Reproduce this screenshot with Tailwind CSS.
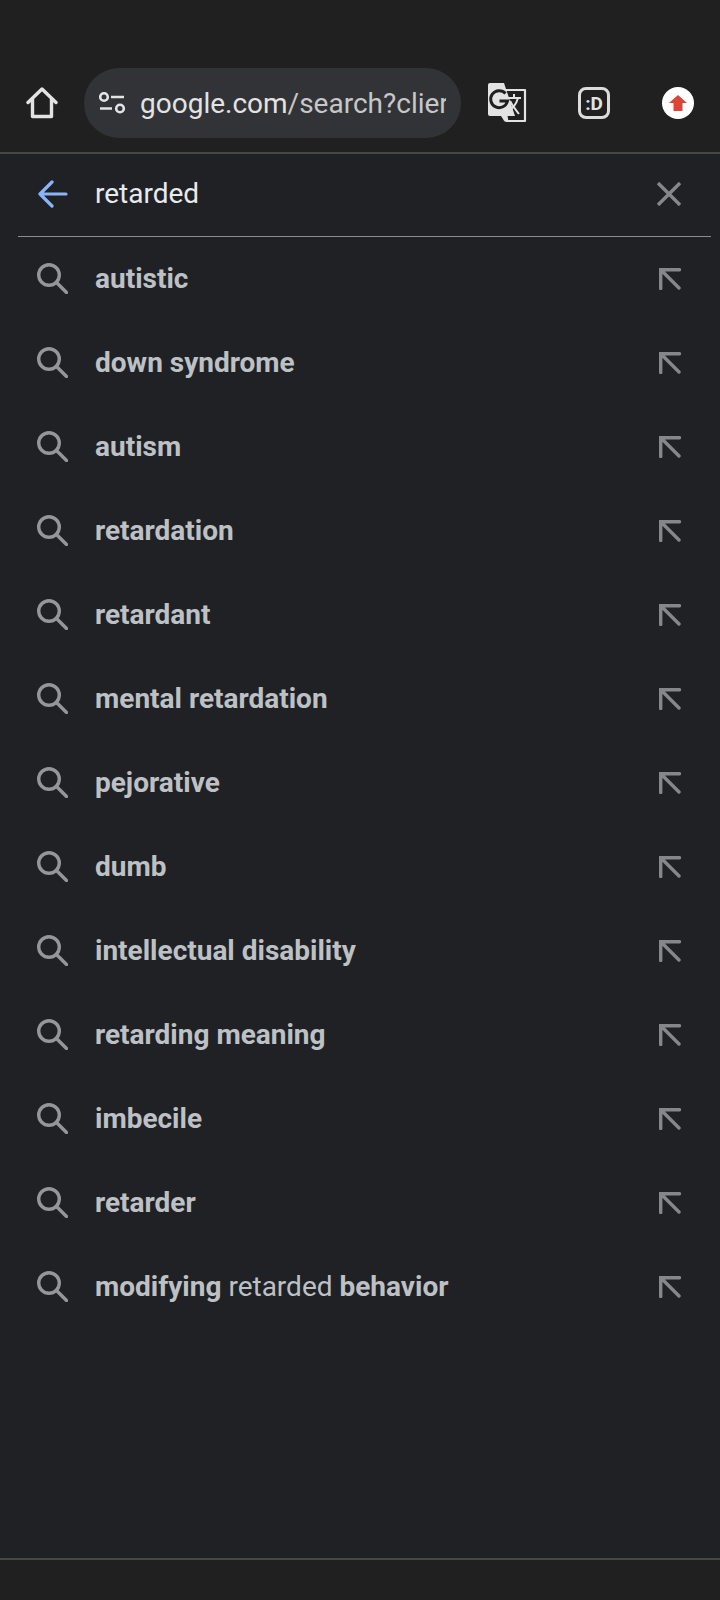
<!DOCTYPE html>
<html><head><meta charset="utf-8">
<script src="https://cdn.jsdelivr.net/npm/@tailwindcss/browser@4"></script>
</head>
<body class="m-0 bg-[#202124] font-['Roboto',sans-serif]">
<div class="w-[720px] h-[1600px] flex flex-col overflow-hidden">
  <header class="h-[154px] shrink-0 bg-[#202020] border-b-2 border-[#474747] pt-[68px] pl-[26px] flex items-start">
    <svg class="w-[32px] h-[32px] mt-[19px] shrink-0" viewBox="0 0 32 32" fill="none" stroke="#e3e3e3" stroke-width="3.400" stroke-linejoin="round" stroke-linecap="round"><path d="M2 15.500 16 2 30 15.500M6.500 12V29.500H25.500V12" /></svg>
    <div class="ml-[26px] w-[377px] h-[70px] shrink-0 rounded-full bg-[#323337] flex items-center pl-[15px] pr-[14px]">
      <svg class="w-[26px] h-[22px] shrink-0" viewBox="0 0 26 22" fill="none" stroke="#e3e3e3" stroke-width="2.600"><circle cx="5" cy="5" r="3.800"/><path d="M12 5H25M1 16.500H13"/><circle cx="21" cy="16.500" r="3.800"/></svg>
      <div class="ml-[15px] w-[306px] overflow-hidden whitespace-nowrap text-[28px] leading-[36px] pt-[2px] text-[#c7c7c7]"><span class="text-[#e3e3e3]">google.com</span>/search?clier</div>
    </div>
    <svg class="w-[40px] h-[40px] ml-[26px] mt-[15px] shrink-0" viewBox="0 0 40 40">
      <path d="M16 7H38V38H20Z" fill="#202020" stroke="#e3e3e3" stroke-width="2.200" stroke-linejoin="round"/>
      <path d="M3 0H17L28 33H3Q1 33 1 31V2Q1 0 3 0Z" fill="#e3e3e3"/>
      <path d="M20 33 22 39H20Q17 39 16 36L14 33Z" fill="#e3e3e3"/>
      <path d="M20 15H34M27 11V15M31 15C29 22 25 26 21 28M23 18C26 24 29 27 32 31" fill="none" stroke="#e3e3e3" stroke-width="2"/>
      <path d="M18.500 10.500A8.500 8.500 0 1 0 20.500 18H12.500" fill="none" stroke="#202020" stroke-width="3"/>
    </svg>
    <div class="ml-[51px] mt-[19px] w-[32px] h-[32px] shrink-0 rounded-[8px] border-[3px] border-[#dcdcdc] flex items-center justify-center text-[19px] leading-none font-bold text-[#e3e3e3]">:D</div>
    <div class="ml-[52px] mt-[19px] w-[32px] h-[32px] shrink-0 rounded-full bg-white flex items-center justify-center">
      <svg class="w-[18px] h-[16px]" viewBox="0 0 18 16"><path d="M9 0 18 8H13.500V16H4.500V8H0Z" fill="#db4437"/></svg>
    </div>
  </header>

  <main class="flex-1 bg-[#202124]">
    <div class="ml-[18px] w-[693px] h-[83px] border-b border-[#8a8b8d] flex items-center pr-[30px] pb-[2px]">
      <svg class="w-[30px] h-[28px] ml-[20px] shrink-0" viewBox="0 0 30 28" fill="none" stroke="#8ab4f8" stroke-width="3.200" stroke-linecap="round" stroke-linejoin="round"><path d="M28 14H2M14 2 2 14 14 26"/></svg>
      <div class="ml-[27px] flex-1 text-[28px] leading-[36px] text-[#e8eaed]">retarded</div>
      <svg class="w-[24px] h-[24px] shrink-0" viewBox="0 0 24 24" fill="none" stroke="#85878a" stroke-width="3.400"><path d="M1 1 23 23M23 1 1 23"/></svg>
    </div>

    <ul class="flex flex-col">
      <li class="h-[84px] flex items-center pl-[37px] pr-[39px]">
        <svg class="w-[31px] h-[31px] mb-[2px] shrink-0" viewBox="0 0 31 31" fill="none" stroke="#93969a" stroke-width="3.400" stroke-linecap="round"><circle cx="12" cy="12" r="10.300"/><path d="M20 20 29.500 29.500"/></svg>
        <div class="ml-[27px] flex-1 text-[28px] leading-[36px] font-bold text-[#bdc1c6]">autistic</div>
        <svg class="w-[22px] h-[22px] shrink-0" viewBox="0 0 22 22" fill="none" stroke="#85878a" stroke-width="3.400" stroke-linecap="round"><path d="M20 20 3 3M1.700 20.500V1.700H20.500"/></svg>
      </li>
      <li class="h-[84px] flex items-center pl-[37px] pr-[39px]">
        <svg class="w-[31px] h-[31px] mb-[2px] shrink-0" viewBox="0 0 31 31" fill="none" stroke="#93969a" stroke-width="3.400" stroke-linecap="round"><circle cx="12" cy="12" r="10.300"/><path d="M20 20 29.500 29.500"/></svg>
        <div class="ml-[27px] flex-1 text-[28px] leading-[36px] font-bold text-[#bdc1c6]">down syndrome</div>
        <svg class="w-[22px] h-[22px] shrink-0" viewBox="0 0 22 22" fill="none" stroke="#85878a" stroke-width="3.400" stroke-linecap="round"><path d="M20 20 3 3M1.700 20.500V1.700H20.500"/></svg>
      </li>
      <li class="h-[84px] flex items-center pl-[37px] pr-[39px]">
        <svg class="w-[31px] h-[31px] mb-[2px] shrink-0" viewBox="0 0 31 31" fill="none" stroke="#93969a" stroke-width="3.400" stroke-linecap="round"><circle cx="12" cy="12" r="10.300"/><path d="M20 20 29.500 29.500"/></svg>
        <div class="ml-[27px] flex-1 text-[28px] leading-[36px] font-bold text-[#bdc1c6]">autism</div>
        <svg class="w-[22px] h-[22px] shrink-0" viewBox="0 0 22 22" fill="none" stroke="#85878a" stroke-width="3.400" stroke-linecap="round"><path d="M20 20 3 3M1.700 20.500V1.700H20.500"/></svg>
      </li>
      <li class="h-[84px] flex items-center pl-[37px] pr-[39px]">
        <svg class="w-[31px] h-[31px] mb-[2px] shrink-0" viewBox="0 0 31 31" fill="none" stroke="#93969a" stroke-width="3.400" stroke-linecap="round"><circle cx="12" cy="12" r="10.300"/><path d="M20 20 29.500 29.500"/></svg>
        <div class="ml-[27px] flex-1 text-[28px] leading-[36px] font-bold text-[#bdc1c6]">retardation</div>
        <svg class="w-[22px] h-[22px] shrink-0" viewBox="0 0 22 22" fill="none" stroke="#85878a" stroke-width="3.400" stroke-linecap="round"><path d="M20 20 3 3M1.700 20.500V1.700H20.500"/></svg>
      </li>
      <li class="h-[84px] flex items-center pl-[37px] pr-[39px]">
        <svg class="w-[31px] h-[31px] mb-[2px] shrink-0" viewBox="0 0 31 31" fill="none" stroke="#93969a" stroke-width="3.400" stroke-linecap="round"><circle cx="12" cy="12" r="10.300"/><path d="M20 20 29.500 29.500"/></svg>
        <div class="ml-[27px] flex-1 text-[28px] leading-[36px] font-bold text-[#bdc1c6]">retardant</div>
        <svg class="w-[22px] h-[22px] shrink-0" viewBox="0 0 22 22" fill="none" stroke="#85878a" stroke-width="3.400" stroke-linecap="round"><path d="M20 20 3 3M1.700 20.500V1.700H20.500"/></svg>
      </li>
      <li class="h-[84px] flex items-center pl-[37px] pr-[39px]">
        <svg class="w-[31px] h-[31px] mb-[2px] shrink-0" viewBox="0 0 31 31" fill="none" stroke="#93969a" stroke-width="3.400" stroke-linecap="round"><circle cx="12" cy="12" r="10.300"/><path d="M20 20 29.500 29.500"/></svg>
        <div class="ml-[27px] flex-1 text-[28px] leading-[36px] font-bold text-[#bdc1c6]">mental retardation</div>
        <svg class="w-[22px] h-[22px] shrink-0" viewBox="0 0 22 22" fill="none" stroke="#85878a" stroke-width="3.400" stroke-linecap="round"><path d="M20 20 3 3M1.700 20.500V1.700H20.500"/></svg>
      </li>
      <li class="h-[84px] flex items-center pl-[37px] pr-[39px]">
        <svg class="w-[31px] h-[31px] mb-[2px] shrink-0" viewBox="0 0 31 31" fill="none" stroke="#93969a" stroke-width="3.400" stroke-linecap="round"><circle cx="12" cy="12" r="10.300"/><path d="M20 20 29.500 29.500"/></svg>
        <div class="ml-[27px] flex-1 text-[28px] leading-[36px] font-bold text-[#bdc1c6]">pejorative</div>
        <svg class="w-[22px] h-[22px] shrink-0" viewBox="0 0 22 22" fill="none" stroke="#85878a" stroke-width="3.400" stroke-linecap="round"><path d="M20 20 3 3M1.700 20.500V1.700H20.500"/></svg>
      </li>
      <li class="h-[84px] flex items-center pl-[37px] pr-[39px]">
        <svg class="w-[31px] h-[31px] mb-[2px] shrink-0" viewBox="0 0 31 31" fill="none" stroke="#93969a" stroke-width="3.400" stroke-linecap="round"><circle cx="12" cy="12" r="10.300"/><path d="M20 20 29.500 29.500"/></svg>
        <div class="ml-[27px] flex-1 text-[28px] leading-[36px] font-bold text-[#bdc1c6]">dumb</div>
        <svg class="w-[22px] h-[22px] shrink-0" viewBox="0 0 22 22" fill="none" stroke="#85878a" stroke-width="3.400" stroke-linecap="round"><path d="M20 20 3 3M1.700 20.500V1.700H20.500"/></svg>
      </li>
      <li class="h-[84px] flex items-center pl-[37px] pr-[39px]">
        <svg class="w-[31px] h-[31px] mb-[2px] shrink-0" viewBox="0 0 31 31" fill="none" stroke="#93969a" stroke-width="3.400" stroke-linecap="round"><circle cx="12" cy="12" r="10.300"/><path d="M20 20 29.500 29.500"/></svg>
        <div class="ml-[27px] flex-1 text-[28px] leading-[36px] font-bold text-[#bdc1c6]">intellectual disability</div>
        <svg class="w-[22px] h-[22px] shrink-0" viewBox="0 0 22 22" fill="none" stroke="#85878a" stroke-width="3.400" stroke-linecap="round"><path d="M20 20 3 3M1.700 20.500V1.700H20.500"/></svg>
      </li>
      <li class="h-[84px] flex items-center pl-[37px] pr-[39px]">
        <svg class="w-[31px] h-[31px] mb-[2px] shrink-0" viewBox="0 0 31 31" fill="none" stroke="#93969a" stroke-width="3.400" stroke-linecap="round"><circle cx="12" cy="12" r="10.300"/><path d="M20 20 29.500 29.500"/></svg>
        <div class="ml-[27px] flex-1 text-[28px] leading-[36px] font-bold text-[#bdc1c6]">retarding meaning</div>
        <svg class="w-[22px] h-[22px] shrink-0" viewBox="0 0 22 22" fill="none" stroke="#85878a" stroke-width="3.400" stroke-linecap="round"><path d="M20 20 3 3M1.700 20.500V1.700H20.500"/></svg>
      </li>
      <li class="h-[84px] flex items-center pl-[37px] pr-[39px]">
        <svg class="w-[31px] h-[31px] mb-[2px] shrink-0" viewBox="0 0 31 31" fill="none" stroke="#93969a" stroke-width="3.400" stroke-linecap="round"><circle cx="12" cy="12" r="10.300"/><path d="M20 20 29.500 29.500"/></svg>
        <div class="ml-[27px] flex-1 text-[28px] leading-[36px] font-bold text-[#bdc1c6]">imbecile</div>
        <svg class="w-[22px] h-[22px] shrink-0" viewBox="0 0 22 22" fill="none" stroke="#85878a" stroke-width="3.400" stroke-linecap="round"><path d="M20 20 3 3M1.700 20.500V1.700H20.500"/></svg>
      </li>
      <li class="h-[84px] flex items-center pl-[37px] pr-[39px]">
        <svg class="w-[31px] h-[31px] mb-[2px] shrink-0" viewBox="0 0 31 31" fill="none" stroke="#93969a" stroke-width="3.400" stroke-linecap="round"><circle cx="12" cy="12" r="10.300"/><path d="M20 20 29.500 29.500"/></svg>
        <div class="ml-[27px] flex-1 text-[28px] leading-[36px] font-bold text-[#bdc1c6]">retarder</div>
        <svg class="w-[22px] h-[22px] shrink-0" viewBox="0 0 22 22" fill="none" stroke="#85878a" stroke-width="3.400" stroke-linecap="round"><path d="M20 20 3 3M1.700 20.500V1.700H20.500"/></svg>
      </li>
      <li class="h-[84px] flex items-center pl-[37px] pr-[39px]">
        <svg class="w-[31px] h-[31px] mb-[2px] shrink-0" viewBox="0 0 31 31" fill="none" stroke="#93969a" stroke-width="3.400" stroke-linecap="round"><circle cx="12" cy="12" r="10.300"/><path d="M20 20 29.500 29.500"/></svg>
        <div class="ml-[27px] flex-1 text-[28px] leading-[36px] font-normal text-[#bdc1c6]"><b class="font-bold">modifying</b> retarded <b class="font-bold">behavior</b></div>
        <svg class="w-[22px] h-[22px] shrink-0" viewBox="0 0 22 22" fill="none" stroke="#85878a" stroke-width="3.400" stroke-linecap="round"><path d="M20 20 3 3M1.700 20.500V1.700H20.500"/></svg>
      </li>
    </ul>
  </main>

  <footer class="h-[42px] shrink-0 bg-[#202020] border-t-2 border-[#474747]"></footer>
</div>
</body></html>
